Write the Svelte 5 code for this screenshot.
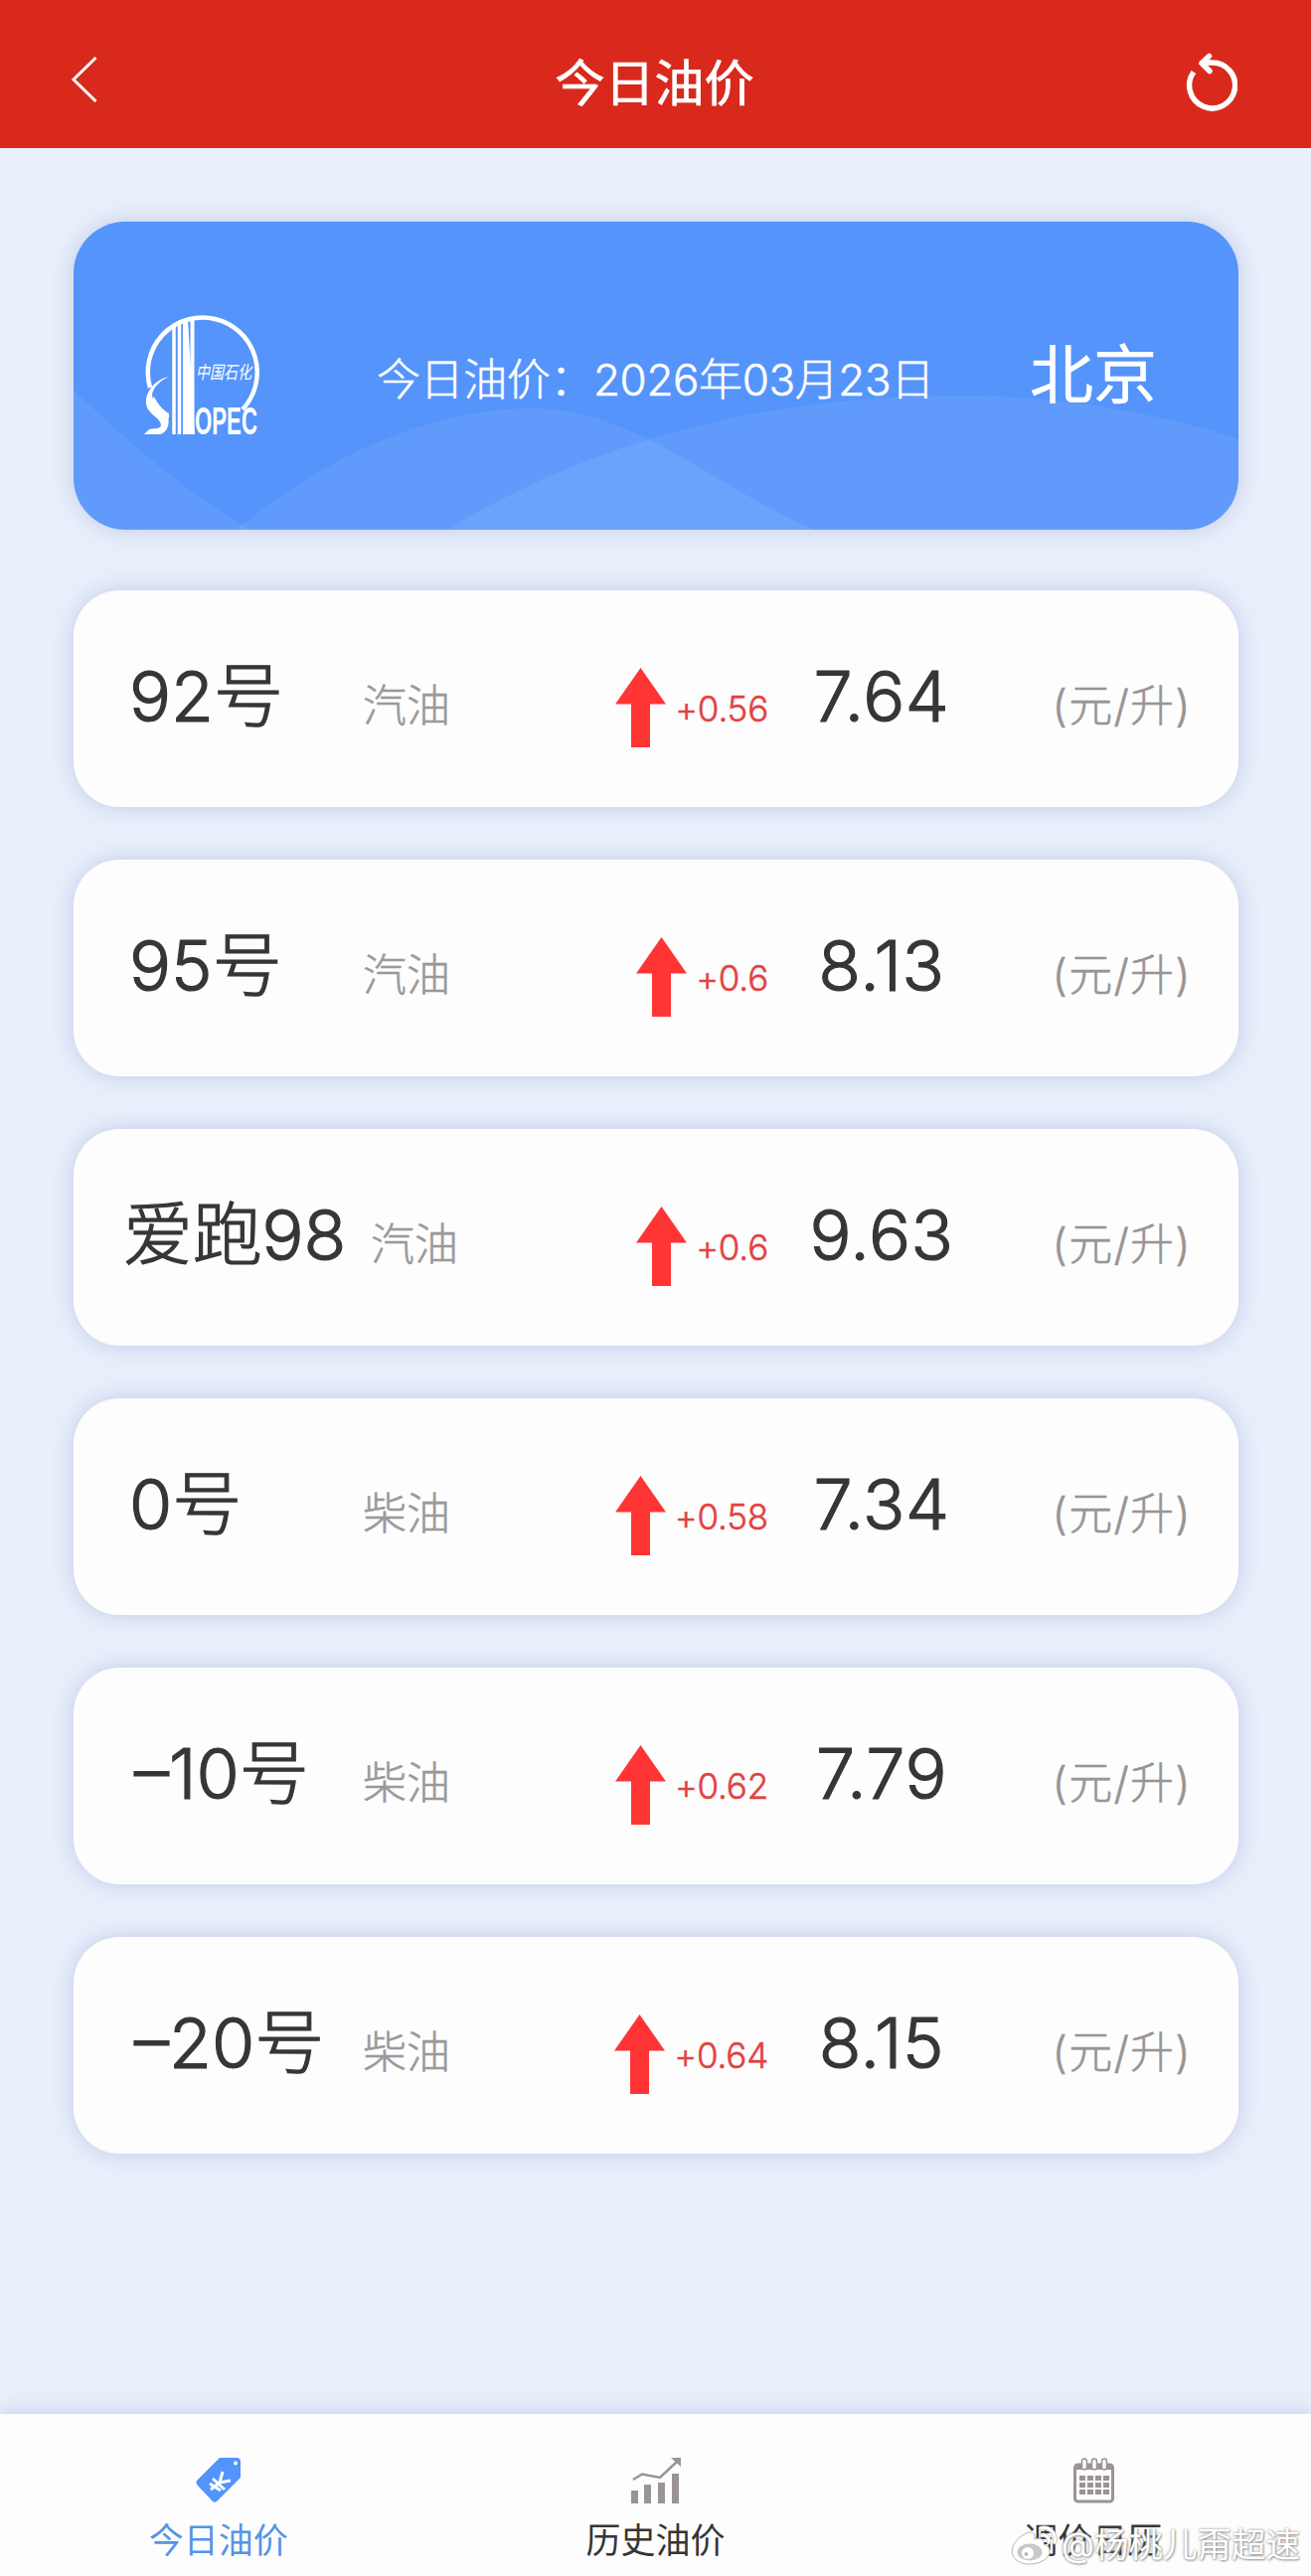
<script>
	let city = '北京';
	let date = '2026年03月23日';

	let prices = [
		{ name: '92号', kind: '汽油', change: '+0.56', price: '7.64' },
		{ name: '95号', kind: '汽油', change: '+0.6', price: '8.13' },
		{ name: '爱跑98', kind: '汽油', change: '+0.6', price: '9.63' },
		{ name: '0号', kind: '柴油', change: '+0.58', price: '7.34' },
		{ name: '–10号', kind: '柴油', change: '+0.62', price: '7.79' },
		{ name: '–20号', kind: '柴油', change: '+0.64', price: '8.15' }
	];

	let tabs = [
		{ id: 'today', label: '今日油价' },
		{ id: 'history', label: '历史油价' },
		{ id: 'calendar', label: '调价日历' }
	];
	let active = 'today';
</script>

<div class="page">
	<header>
		<button class="icon" aria-label="返回">
			<svg width="27" height="46" viewBox="0 0 27 46" fill="none" stroke="#fff" stroke-width="3">
				<path d="M25.500 1 3 23l22.500 22" />
			</svg>
		</button>
		<h1>今日油价</h1>
		<button class="icon" aria-label="刷新">
			<svg width="54" height="60" viewBox="0 0 54 60" fill="none" stroke="#fff" stroke-width="5.500">
				<path d="M10 20.500A23 23 0 1 0 28 11H18" />
				<path d="M25.500 4.500 18 11.500 26 19.500" stroke-linecap="round" stroke-linejoin="round" />
			</svg>
		</button>
	</header>

	<main>
		<section class="banner">
			<svg class="waves" viewBox="0 0 1172 310" preserveAspectRatio="none">
				<path d="M0 170C55 220 110 272 178 310H0z" />
				<path d="M164 310C260 232 360 188 462 188C565 188 640 264 745 310z" />
				<path d="M376 310C520 222 690 175 890 175C990 175 1080 190 1172 218V310z" />
			</svg>
			<svg class="logo" width="116" height="122" viewBox="0 0 116 122">
				<g fill="none" stroke="#fff">
					<path d="M6 73A55 55 0 1 1 99 95" stroke-width="4.500" />
					<path d="M30 12V120M35.500 9V120" stroke-width="3.500" />
					<path d="M48.500 3V120" stroke-width="4" />
				</g>
				<g fill="#fff">
					<path d="M25 62C10 65 1 78 2 89c1 11 15 14 15 22c-1 4-8 3-12 4l-5 5h16c9-2 11-15 6-22c-4-6-14-9-14-18c1-7 8-14 17-18z" />
					<path d="M10 82c4 8 9 14 15 17v5c-9-4-15-12-17-18z" />
					<path d="M39 7l5-2 7 115h-5z" />
					<path d="M39 7h3.500l4 113H39z" />
				</g>
				<text x="52" y="64" class="logo-cn" textLength="56" lengthAdjust="spacingAndGlyphs">中国石化</text>
				<text x="51" y="120" class="logo-en" textLength="63" lengthAdjust="spacingAndGlyphs">OPEC</text>
			</svg>
			<p class="date">今日油价：{date}</p>
			<p class="city">{city}</p>
		</section>

		{#each prices as item}
			<section class="card">
				<div class="name" class:long={item.name.startsWith('爱跑')} class:minus={item.name.startsWith('–')}>
					{item.name}
				</div>
				<div class="kind">{item.kind}</div>
				<div class="change">
					<svg width="51" height="80" viewBox="0 0 51 80" fill="#ff3535">
						<path d="M25.500 0 51 36.500H35V80H16V36.500H0z" />
					</svg>
					<span>{item.change}</span>
				</div>
				<div class="price">{item.price}</div>
				<div class="unit">(元/升)</div>
			</section>
		{/each}
	</main>

	<nav>
		{#each tabs as tab}
			<button class="tab" class:active={tab.id === active} on:click={() => (active = tab.id)}>
				{#if tab.id === 'today'}
					<svg width="46" height="46" viewBox="0 0 46 46">
						<path d="M24 0h17q4 0 4 4v16L21 44q-2 1.500-4 0L1 27q-1-2 0-4z" fill="#5294fb" />
						<circle cx="40" cy="5.500" r="2" fill="#fff" />
						<path d="M24 25 27 14M24 25 35 23M17 21 29 32M14 26 25 33M24 25 15 32" stroke="#fff" stroke-width="3" fill="none" />
					</svg>
				{:else if tab.id === 'history'}
					<svg width="52" height="46" viewBox="0 0 52 46">
						<path d="M1 33h7v13H1zM14 27h7v19h-7zM28 25h7v21h-7zM42 16h7v30h-7z" fill="#9b9494" />
						<path d="M3 22 12 16.500 30 20 47 4" fill="none" stroke="#9b9494" stroke-width="2.500" />
						<path d="M41 0h10v9z" fill="#9b9494" />
					</svg>
				{:else}
					<svg class="calendar" width="42" height="46" viewBox="0 0 42 46">
						<rect x="1.500" y="7" width="38" height="37" rx="3" fill="#fdfdfd" stroke="#9b9494" stroke-width="3" />
						<path d="M1 12q0-6 5-6h30q5 0 5 6H1z" fill="#9b9494" />
						<g fill="#fdfdfd" stroke="#9b9494" stroke-width="1.500">
							<rect x="8.500" y="1" width="5" height="11" rx="2.500" />
							<rect x="18.500" y="1" width="5" height="11" rx="2.500" />
							<rect x="28.500" y="1" width="5" height="11" rx="2.500" />
						</g>
						<path d="M6 20.500H36M6 27.500H36M6 34.500H36" stroke="#9b9494" stroke-width="5" stroke-dasharray="6 2" />
					</svg>
				{/if}
				<span>{tab.label}</span>
			</button>
		{/each}
	</nav>

	<div class="watermark">
		<svg width="48" height="42" viewBox="0 0 48 42">
			<path d="M19 8C9 10 1 20 1 28c1 8 10 13 20 12c11-1 19-7 18-14c0-3-3-5-6-6c1-5-3-7-9-5c1-4-1-7-5-7z" fill="#fff" stroke="#b5b5b5" />
			<ellipse cx="19" cy="28" rx="12.500" ry="8.500" fill="#c8c8c8" />
			<circle cx="17" cy="29" r="6" fill="#fff" />
			<circle cx="15.500" cy="30" r="2" fill="#bbb" />
			<g fill="none" stroke-linecap="round">
				<path d="M30 4c9-2 16 5 14 14M31 11c5-1 8 3 7 7" stroke="#bbb" stroke-width="4.500" />
				<path d="M30 4c9-2 16 5 14 14M31 11c5-1 8 3 7 7" stroke="#fff" stroke-width="3" />
			</g>
		</svg>
		<span>@杨桃儿甭超速</span>
	</div>
</div>

<style>
	:global(body) {
		margin: 0;
		background: #e9effb;
	}
	.page {
		position: relative;
		display: flex;
		flex-direction: column;
		width: 1319px;
		height: 2592px;
		background: #e9effb;
		color: #363636;
		font-family: Inter, 'Noto Sans CJK SC', sans-serif;
		overflow: hidden;
	}
	button {
		border: 0;
		padding: 0;
		background: none;
		font: inherit;
		color: inherit;
	}
	svg {
		display: block;
		flex: none;
	}
	h1,
	p {
		margin: 0;
	}
	header {
		display: flex;
		align-items: center;
		justify-content: space-between;
		box-sizing: border-box;
		height: 149px;
		padding: 14px 74px 0 71px;
		background: #d9291c;
		color: #fff;
	}
	.icon {
		width: 54px;
	}
	.icon:first-child {
		padding-bottom: 4px;
	}
	h1 {
		padding: 4px 0 0 1px;
		font-size: 50px;
		font-weight: 400;
		line-height: 60px;
		-webkit-text-stroke: 0.7px #fff;
	}
	main {
		display: flex;
		flex-direction: column;
		flex: 1;
		gap: 53px;
		padding: 74px 73px 0 74px;
	}
	.banner {
		position: relative;
		display: flex;
		align-items: center;
		height: 310px;
		margin-bottom: 8px;
		border-radius: 52px;
		background: #5494fb;
		box-shadow: 0 0 22px rgba(90, 110, 180, 0.28);
		color: #fff;
	}
	.waves {
		position: absolute;
		inset: 0;
		width: 100%;
		height: 100%;
		border-radius: 52px;
		fill: rgba(255, 255, 255, 0.07);
	}
	.logo {
		position: relative;
		margin-left: 71px;
		overflow: visible;
	}
	.logo-cn {
		font-size: 18px;
		font-style: italic;
		font-weight: 400;
		fill: #fff;
	}
	.logo-en {
		font-family: 'Liberation Sans', sans-serif;
		font-size: 38px;
		font-weight: 700;
		fill: #fff;
	}
	.date {
		position: relative;
		width: 560px;
		margin: 2px 0 0 118px;
		font-size: 44px;
		font-weight: 300;
		letter-spacing: -0.4px;
		white-space: nowrap;
		-webkit-text-stroke: 0.5px #fff;
	}
	.city {
		position: relative;
		margin: -12px 0 0 97px;
		font-size: 64px;
		font-weight: 400;
		-webkit-text-stroke: 0.5px #fff;
	}
	.card {
		display: flex;
		align-items: baseline;
		box-sizing: border-box;
		height: 218px;
		padding: 52px 47px 0 56px;
		border-radius: 46px;
		background: #fdfdfd;
		box-shadow: 0 0 22px rgba(90, 110, 180, 0.28);
		white-space: nowrap;
	}
	.name,
	.price {
		font-size: 70px;
		font-weight: 300;
		line-height: 90px;
		-webkit-text-stroke: 1.2px #363636;
	}
	.name {
		min-width: 209px;
		margin-right: 26px;
	}
	.name.long {
		margin-left: -6px;
		margin-right: 25px;
		letter-spacing: -0.2px;
	}
	.name.minus {
		min-width: 204px;
		margin-left: 5px;
	}
	.kind {
		width: 88px;
		color: #999;
		font-size: 44px;
		font-weight: 300;
		-webkit-text-stroke: 0.5px #999;
	}
	.change {
		display: flex;
		flex: 1;
		align-items: baseline;
		justify-content: flex-end;
		gap: 9px;
		color: #e34141;
		font-size: 35px;
		font-weight: 300;
		letter-spacing: -0.2px;
		-webkit-text-stroke: 0.5px #e34141;
	}
	/* the arrow hangs below the text baseline */
	.change svg {
		transform: translateY(26px);
	}
	.price {
		width: 228px;
		letter-spacing: 0.6px;
		text-align: center;
	}
	.unit {
		width: 198px;
		color: #999494;
		font-size: 44px;
		font-weight: 300;
		letter-spacing: 1.3px;
		text-align: right;
		-webkit-text-stroke: 0.5px #999494;
	}
	nav {
		display: flex;
		height: 163px;
		background: #fdfdfd;
		box-shadow: 0 0 20px rgba(90, 110, 180, 0.28);
	}
	.tab {
		display: flex;
		flex: 1;
		flex-direction: column;
		align-items: center;
		padding-top: 44px;
		font-size: 35px;
		line-height: 40px;
	}
	.tab span {
		margin-top: 17px;
	}
	.tab.active {
		color: #5494e8;
	}
	.calendar {
		margin-left: 3px;
	}
	.watermark {
		position: absolute;
		right: 11px;
		bottom: 10px;
		display: flex;
		align-items: center;
		gap: 3px;
		color: #fff;
		font-size: 34.5px;
		line-height: 40px;
		text-shadow: 0 0 3px #888, 1px 1px 2px #aaa;
	}
</style>
